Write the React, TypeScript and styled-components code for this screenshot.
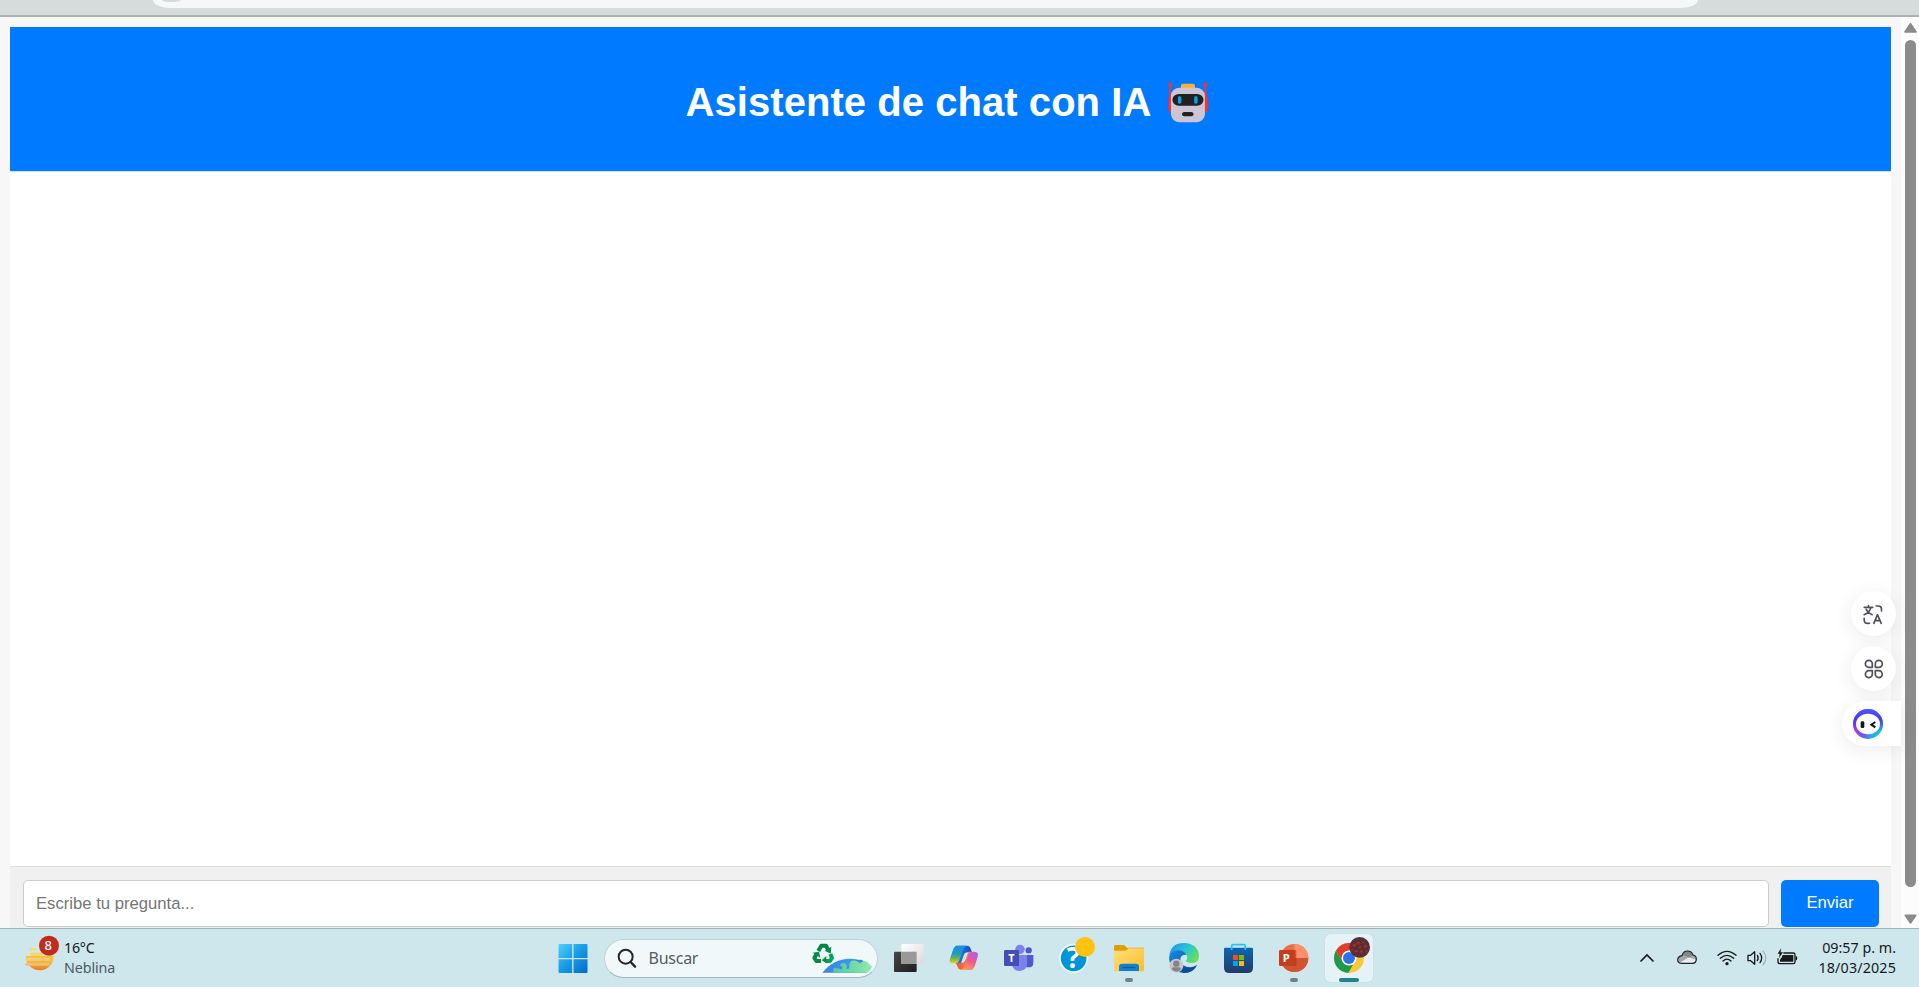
import React from "react";
import styled, { createGlobalStyle } from "styled-components";

const GlobalStyle = createGlobalStyle`
  * { box-sizing: border-box; }
  html, body { margin: 0; padding: 0; overflow: hidden; }
  body { font-family: "Liberation Sans", Arial, sans-serif; }
  svg { display: block; flex: none; }
`;

const Screen = styled.div`
  display: flex;
  flex-direction: column;
  width: 100vw;
  height: 100vh;
  overflow: hidden;
  background: #f7f7f7;
`;

const BrowserBar = styled.div`
  flex: none;
  height: 17px;
  padding-left: 153px;
  background: #d6dcdb;
  border-bottom: 2px solid #a9b2af;
`;

const AddressBar = styled.div`
  width: 1545px;
  height: 8px;
  padding-left: 9px;
  overflow: hidden;
  border-radius: 0 0 18px 18px / 0 0 8px 8px;
  background: #f5f8f7;
`;

const SiteButton = styled.div`
  width: 19px;
  height: 2px;
  border-radius: 0 0 9px 9px / 0 0 2px 2px;
  background: #d6dcdb;
`;

const Viewport = styled.div`
  position: relative;
  flex: 1;
  min-height: 0;
  display: flex;
`;

const Page = styled.main`
  flex: 1;
  display: flex;
  flex-direction: column;
  padding: 10px 10px 0;
`;

const Header = styled.header`
  flex: none;
  height: 144px;
  display: flex;
  justify-content: center;
  align-items: center;
  gap: 17px;
  padding: 6px 6px 0 0;
  background: #007bff;
  color: #fff;
`;

const Title = styled.h1`
  margin: 0;
  font-size: 40px;
  line-height: 46px;
  font-weight: 700;
  letter-spacing: 0.05px;
  white-space: nowrap;
`;

const Messages = styled.section`
  flex: 1;
  background: #fff;
  border-top: 1px solid #ddd;
`;

const Composer = styled.form`
  flex: none;
  height: 62px;
  display: flex;
  gap: 12px;
  padding: 13px 12px 1px 13px;
  background: #f0f0f0;
  border-top: 1px solid #ddd;
`;

const Question = styled.input`
  flex: 1;
  height: 47px;
  padding: 0 12px;
  font: 16.67px "Liberation Sans", Arial, sans-serif;
  border: 1px solid #ccc;
  border-radius: 5px;
  background: #fff;
  outline: none;
  &::placeholder { color: #757575; opacity: 1; }
`;

const Send = styled.button`
  width: 98px;
  height: 47px;
  padding: 0 0 2px;
  border: 0;
  border-radius: 5px;
  background: #007bff;
  color: #fff;
  font: 16.67px "Liberation Sans", Arial, sans-serif;
`;

const Scrollbar = styled.div`
  flex: none;
  width: 18px;
  display: flex;
  flex-direction: column;
  align-items: center;
  padding: 6px 0 4px 1px;
  background: #fcfcfc;
`;

const Thumb = styled.div`
  width: 11px;
  height: 847px;
  margin: 7px 0 27px;
  border-radius: 6px;
  background: #8b8b8b;
`;

const FloatingTools = styled.aside`
  position: absolute;
  right: 18px;
  top: 574px;
  display: flex;
  flex-direction: column;
  align-items: flex-end;
  gap: 10px;
`;

const ToolBubble = styled.div<{ $docked?: boolean }>`
  display: flex;
  align-items: center;
  justify-content: ${(p) => (p.$docked ? "flex-start" : "center")};
  width: ${(p) => (p.$docked ? 59 : 45)}px;
  height: 45px;
  margin-right: ${(p) => (p.$docked ? 0 : 5)}px;
  padding-left: ${(p) => (p.$docked ? 11 : 0)}px;
  border-radius: ${(p) => (p.$docked ? "23px 0 0 23px" : "50%")};
  background: #fff;
  box-shadow: 0 4px 20px rgba(0, 0, 0, 0.08);
`;

const Taskbar = styled.footer`
  flex: none;
  height: 59px;
  display: flex;
  align-items: center;
  background: #cee7ed;
  border-top: 1px solid #9fb2b6;
  font-family: "Noto Sans", "Segoe UI", sans-serif;
  color: #15191a;
`;

const Weather = styled.div`
  flex: none;
  width: 545px;
  padding-left: 25px;
  display: flex;
  gap: 4px;

  svg { margin-top: -3px; }
`;

const TextLines = styled.div<{ $right?: boolean }>`
  font-size: 14.3px;
  line-height: 20px;
  letter-spacing: ${(p) => (p.$right ? 0 : -0.25)}px;
  white-space: nowrap;
  text-align: ${(p) => (p.$right ? "right" : "left")};
`;

const Muted = styled.div`
  letter-spacing: -0.1px;
  color: #4b5a5d;
`;

const DateLine = styled.div`
  letter-spacing: 0.15px;
`;

const Dock = styled.nav`
  flex: none;
  display: flex;
  align-items: center;
`;

const Slot = styled.div`
  position: relative;
  width: 55px;
  height: 48px;
  display: flex;
  justify-content: center;
`;

const Tile = styled.div<{ $active?: boolean }>`
  width: 48px;
  height: 48px;
  border-radius: 5px;
  background: ${(p) => (p.$active ? "#e5f2f7" : "transparent")};
  box-shadow: ${(p) => (p.$active ? "0 0 1px #a9bdc2" : "none")};
`;

const Indicator = styled.span<{ $active?: boolean }>`
  position: absolute;
  left: 50%;
  bottom: 0;
  width: ${(p) => (p.$active ? 20 : 8)}px;
  height: 4px;
  border-radius: 2px;
  transform: translateX(-50%);
  background: ${(p) => (p.$active ? "#23808f" : "#738084")};
`;

const Search = styled.div`
  width: 274px;
  height: 39px;
  margin: 0 4px 0 3.5px;
  padding: 0 5px 0 12.5px;
  display: flex;
  align-items: center;
  border-radius: 20px;
  border: 1px solid #c0d4da;
  border-bottom-color: #a3b8bd;
  background: #f0f8fa;
`;

const SearchLabel = styled.span`
  flex: 1;
  padding-left: 11.5px;
  font-size: 16px;
  letter-spacing: -0.25px;
  color: #555d5f;
`;

const Tray = styled.div`
  flex: 1;
  display: flex;
  align-items: center;
  justify-content: flex-end;
  padding-right: 23px;
`;

const TrayGroup = styled.div`
  display: flex;
  align-items: center;
  gap: 10px;
  margin: 0 20px 0 23px;
`;

const CloudSlot = styled.div`
  margin-right: 10px;
`;

const Robot = () => (
  <svg width="41" height="42" viewBox="1372 62 111 126" preserveAspectRatio="none">
    <g fill="#f8312f">
      <circle cx="1378" cy="73" r="6" />
      <circle cx="1473" cy="73" r="6" />
      <path d="M1376 75h4l2 40h-7zM1471 75h4l2 40h-7z" />
      <rect x="1373" y="110" width="12" height="45" rx="5" />
      <rect x="1468" y="110" width="12" height="45" rx="5" />
    </g>
    <rect x="1407" y="70" width="38" height="18" rx="6" fill="#ffb02e" />
    <rect x="1380" y="82" width="92" height="104" rx="24" fill="#cdc4d6" />
    <rect x="1384" y="101" width="84" height="35" rx="17" fill="#212121" />
    <rect x="1399" y="108" width="9" height="22" rx="4" fill="#00a6ed" />
    <rect x="1443" y="108" width="9" height="22" rx="4" fill="#00a6ed" />
    <rect x="1410" y="155" width="31" height="13" rx="6" fill="#212121" />
  </svg>
);

const ArrowUp = () => (
  <svg width="13" height="10" viewBox="0 0 13 10">
    <path d="M6.5 1 11.8 8.7H1.2Z" fill="#8b8b8b" stroke="#8b8b8b" strokeWidth="2" strokeLinejoin="round" />
  </svg>
);

const ArrowDown = () => (
  <svg width="13" height="10" viewBox="0 0 13 10">
    <path d="M6.5 8.7 11.5 1.5H1.5Z" fill="#8b8b8b" stroke="#8b8b8b" strokeWidth="2" strokeLinejoin="round" />
  </svg>
);

const TranslateIcon = () => (
  <svg width="22" height="22" viewBox="187.500 98 66 66" fill="none" stroke="#50505a" strokeWidth="5" strokeLinecap="round" strokeLinejoin="round">
    <path d="M191 111h26M204 106v5M211 112c-3 10-10 17-20 21M197 117c4 8 10 13 18 16" />
    <path d="M227 107h6q10 0 10 10v5M191 144v4q0 11 11 11h5" />
    <path d="M220 159l11-26 11 26M224 151h14" />
  </svg>
);

const CloverIcon = () => (
  <svg width="22" height="22" viewBox="187 264 66 66" fill="none" stroke="#50505a" strokeWidth="5" strokeLinejoin="round">
    <path d="M215 292h-10a10.500 10.500 0 1 1 10-10.500zM224 292v-10.500a10.500 10.500 0 1 1 10.500 10.500zM215 302v10a10.500 10.500 0 1 1-10.500-10zM224 302h10.500a10.500 10.500 0 1 1-10.500 10z" />
  </svg>
);

const AssistantIcon = () => (
  <svg width="30" height="30" viewBox="159 417 90 90">
    <defs>
      <linearGradient id="ring" x1="0.1" y1="0.6" x2="0.85" y2="0.8">
        <stop offset="0" stopColor="#b43be0" />
        <stop offset="0.45" stopColor="#5b65f0" />
        <stop offset="0.8" stopColor="#20b8e0" />
      </linearGradient>
      <linearGradient id="ringTop" x1="0" y1="0" x2="0" y2="1">
        <stop offset="0" stopColor="#4a58ff" />
        <stop offset="0.35" stopColor="#4a35f5" />
        <stop offset="0.75" stopColor="#4a35f5" stopOpacity="0" />
      </linearGradient>
    </defs>
    <circle cx="204" cy="462" r="45" fill="url(#ring)" />
    <circle cx="204" cy="462" r="45" fill="url(#ringTop)" />
    <ellipse cx="204" cy="462" rx="36" ry="31" fill="#fff" />
    <rect x="182" y="454" width="11" height="20" rx="4" fill="#15151c" />
    <path d="M226 456l-12 8 12 8" fill="none" stroke="#15151c" strokeWidth="6" />
  </svg>
);

const WeatherIcon = () => (
  <svg width="35" height="38" viewBox="75 255 105 114">
    <defs>
      <linearGradient id="sun" x1="0" y1="0" x2="0" y2="1">
        <stop offset="0.3" stopColor="#fbc02d" />
        <stop offset="1" stopColor="#f4791f" />
      </linearGradient>
    </defs>
    <path d="M78 318h83a42 42 0 0 1-83 10z" fill="url(#sun)" />
    <g strokeLinecap="round" strokeWidth="9" fill="none">
      <path d="M94 298h10" stroke="#fbdc70" />
      <path d="M94 313h40" stroke="#fad664" />
      <path d="M81 328h43M136 328h9" stroke="#ead08b" />
      <path d="M80 343h66" stroke="#e5c07e" />
    </g>
    <circle cx="147" cy="287" r="30" fill="#c42b1c" />
    <text x="145" y="301" textAnchor="middle" fontFamily="Noto Sans, sans-serif" fontSize="39" fontWeight="500" fill="#fff">8</text>
  </svg>
);

const StartIcon = () => (
  <svg width="48" height="48" viewBox="25.500 42 144 144">
    <defs>
      <linearGradient id="win" gradientUnits="userSpaceOnUse" x1="54" y1="72" x2="141" y2="159">
        <stop offset="0" stopColor="#4fd0fb" />
        <stop offset="0.5" stopColor="#189ae4" />
        <stop offset="1" stopColor="#0669c9" />
      </linearGradient>
    </defs>
    <path d="M57 72h38v42H54V75q0-3 3-3zM99 72h39q3 0 3 3v39H99zM54 118h41v41H57q-3 0-3-3zM99 118h42v38q0 3-3 3H99z" fill="url(#win)" />
  </svg>
);

const SearchIcon = () => (
  <svg width="20" height="20" viewBox="232 84 60 60" fill="none" stroke="#262626">
    <circle cx="258" cy="110" r="21" strokeWidth="6" />
    <path d="M273 126l13 14" strokeWidth="7" strokeLinecap="round" />
  </svg>
);

const EarthArt = () => (
  <svg width="60" height="32" viewBox="812 72 180 96">
    <defs>
      <linearGradient id="earth">
        <stop offset="0" stopColor="#3b83e2" />
        <stop offset="1" stopColor="#36a7f0" />
      </linearGradient>
      <linearGradient id="land">
        <stop offset="0" stopColor="#52c7a3" />
        <stop offset="1" stopColor="#8deba9" />
      </linearGradient>
    </defs>
    <path d="M843 164q34-42 82-42 38 0 66 24-4 12-15 18z" fill="url(#earth)" />
    <path d="M877 163q-4-14 5-14l20 5q4-10-5-10-3-9 12-9 9 2 7 18 8 2 8-10-1-12 8-15l24-2 12 2q12 3 23 18-4 12-15 18z" fill="url(#land)" />
    <path d="M940 126l16 9 10-5-6-5z" fill="#2e8be8" />
    <g fill="none" strokeWidth="12" strokeLinejoin="round">
      <path d="M831 99l9-16h14l7 14" stroke="#008748" />
      <path d="M867 108l5 12-6 9h-13" stroke="#00a651" />
      <path d="M826 107l-7 13 6 9h14" stroke="#078b3e" />
    </g>
    <path d="M870 86l-2 21-18-9zM855 114v22l-14-9zM814 104l19-3 4 18z" fill="#078f46" />
  </svg>
);

const TaskViewIcon = () => (
  <svg width="48" height="48" viewBox="45 42 144 144">
    <defs>
      <linearGradient id="dark" x1="0" y1="0" x2="1" y2="1"><stop stopColor="#484848" /><stop offset="1" stopColor="#1e1e1e" /></linearGradient>
      <linearGradient id="light" x1="0" y1="0" x2="1" y2="1"><stop stopColor="#fff" /><stop offset="1" stopColor="#dadada" /></linearGradient>
    </defs>
    <rect x="72" y="95" width="68" height="61" rx="3" fill="url(#dark)" />
    <rect x="94" y="72" width="67" height="60" rx="3" fill="url(#light)" />
    <path d="M94 95h46v37H97q-3 0-3-3z" fill="#999" />
  </svg>
);

const CopilotIcon = () => (
  <svg width="48" height="48" viewBox="210 42 144 144">
    <defs>
      <linearGradient id="cpA" x1="0" y1="0" x2="0" y2="1">
        <stop offset="0.05" stopColor="#168fe8" /><stop offset="0.45" stopColor="#239bb5" /><stop offset="0.72" stopColor="#69b453" /><stop offset="1" stopColor="#eed02b" />
      </linearGradient>
      <linearGradient id="cpB" x1="0.7" y1="0" x2="0.3" y2="1">
        <stop offset="0" stopColor="#b75ce8" /><stop offset="0.5" stopColor="#ee5a91" /><stop offset="1" stopColor="#ff9a5c" />
      </linearGradient>
      <linearGradient id="cpC"><stop stopColor="#168ced" /><stop offset="1" stopColor="#1b45c5" /></linearGradient>
      <linearGradient id="cpD"><stop stopColor="#ef5130" /><stop offset="1" stopColor="#ff9a5a" /></linearGradient>
    </defs>
    <path d="M257 77h34q8 0 11 9l4 11h-13q-9 0-12 9l-8 24H255z" fill="url(#cpC)" />
    <path d="M307 149h-34q-8 0-10-8l-5-12h15q10 0 13-9l9-25h20z" fill="url(#cpD)" />
    <path d="M262 77h28q-8 3-11 14l-11 29q-4 10-12 10h-8q-12 0-8-14l9-27q4-12 13-12z" fill="url(#cpA)" />
    <path d="M303 149h-29q8-3 11-13l10-30q3-10 12-10h8q12 0 8 14l-8 26q-4 13-12 13z" fill="url(#cpB)" />
  </svg>
);

const TeamsIcon = () => (
  <svg width="48" height="48" viewBox="375 42 144 144">
    <circle cx="476" cy="91" r="9.500" fill="#5059c9" />
    <path d="M460 105h30v23q0 14-14 14h-16z" fill="#5059c9" />
    <circle cx="450" cy="88" r="14" fill="#7b83eb" />
    <path d="M426 105h45v25q0 22-22 23-19 0-23-19z" fill="#7b83eb" />
    <rect x="402" y="90" width="45" height="48" rx="4" fill="#444cb5" />
    <text x="424.500" y="126" textAnchor="middle" fontFamily="Noto Sans, sans-serif" fontWeight="700" fontSize="33" fill="#fff">T</text>
  </svg>
);

const HelpIcon = () => (
  <svg width="48" height="48" viewBox="540 42 144 144">
    <circle cx="611" cy="115" r="41" fill="#0095d9" stroke="#f5fcff" strokeWidth="5" />
    <text x="610" y="143" textAnchor="middle" fontFamily="Open Sans, sans-serif" fontWeight="700" fontSize="83" fill="#fff">?</text>
    <circle cx="645" cy="81" r="30" fill="#ffc20e" />
  </svg>
);

const ExplorerIcon = () => (
  <svg width="48" height="48" viewBox="45 42 144 144">
    <defs>
      <linearGradient id="folder" x1="0" y1="0" x2="1" y2="1"><stop stopColor="#ffe07a" /><stop offset="1" stopColor="#fbbd2c" /></linearGradient>
    </defs>
    <path d="M72 78q0-3 3-3h24q4 0 7 3l5 5h48q3 0 3 3v12H72z" fill="#dca006" />
    <path d="M72 92h32q4 0 7-3l4-4h44q3 0 3 3v63q0 3-3 3H75q-3 0-3-3z" fill="url(#folder)" />
    <path d="M87 153v-13q0-9 9-9h42q9 0 9 9v13z" fill="#1180d0" />
    <path d="M97 143h39" stroke="#0a559a" strokeWidth="3" />
  </svg>
);

const EdgeIcon = () => (
  <svg width="48" height="48" viewBox="210 42 144 144">
    <defs>
      <linearGradient id="edTop" x1="0" y1="0.2" x2="1" y2="0.7"><stop stopColor="#2394e5" /><stop offset="0.5" stopColor="#2bc4d8" /><stop offset="1" stopColor="#69e34b" /></linearGradient>
      <linearGradient id="edLeft" x1="0" y1="0" x2="1" y2="1"><stop stopColor="#1689e0" /><stop offset="1" stopColor="#0c51a5" /></linearGradient>
    </defs>
    <path d="M237 114q4-27 27-27 20 0 27 17-21-1-20 16 3 22 31 22 10-1 19-7-13 25-39 24-41-2-45-45z" fill="url(#edLeft)" />
    <path d="M237 109q5-40 45-40 43 2 45 39 0 22-22 21-13 0-18-5 8-8 3-18-8-15-26-15-20 0-27 18z" fill="url(#edTop)" />
    <path d="M270 117q-3 26 28 27 15 0 23-9-12 25-41 23-27-12-10-41z" fill="#0b4c9b" />
    <circle cx="259" cy="137" r="21" fill="#c7c7c7" />
    <circle cx="259" cy="131" r="9.500" fill="#858585" />
    <path d="M245 148q0-6 6-6h16q6 0 6 6-13 14-28 0z" fill="#858585" />
  </svg>
);

const StoreIcon = () => (
  <svg width="48" height="48" viewBox="375 42 144 144">
    <defs>
      <linearGradient id="bag" x1="0" y1="0" x2="0" y2="1"><stop stopColor="#0b67b5" /><stop offset="1" stopColor="#243a69" /></linearGradient>
    </defs>
    <path d="M402 87q0-4 4-4h79q4 0 4 4v56q0 16-16 16h-55q-16 0-16-16z" fill="url(#bag)" />
    <path d="M425 90V78q0-4 4-4h33q4 0 4 4v12" fill="none" stroke="#27c3f3" strokeWidth="5" />
    <path d="M429 105h15v15h-15z" fill="#f25022" />
    <path d="M447 105h15v15h-15z" fill="#7fba00" />
    <path d="M429 123h15v15h-15z" fill="#00a4ef" />
    <path d="M447 123h15v15h-15z" fill="#ffb900" />
  </svg>
);

const PowerPointIcon = () => (
  <svg width="48" height="48" viewBox="540 42 144 144">
    <circle cx="613" cy="114" r="42" fill="#ed6c47" />
    <path d="M613 72a42 42 0 0 1 42 42h-42z" fill="#ff8f6b" />
    <path d="M571 114h84a42 42 0 0 1-84 0z" fill="#d35230" />
    <path d="M590 90h29v48h-29z" fill="#9e3119" opacity="0.55" />
    <rect x="567" y="90" width="48" height="48" rx="4" fill="#c43e1c" />
    <text x="589" y="126" textAnchor="middle" fontFamily="Noto Sans, sans-serif" fontWeight="700" fontSize="34" fill="#fff">P</text>
  </svg>
);

const ChromeIcon = () => (
  <svg width="48" height="48" viewBox="705 42 144 144">
    <circle cx="777" cy="114" r="45" fill="#fcc934" />
    <path d="M738 91.500A45 45 0 0 1 816 91.500H777V114z" fill="#e33b2e" />
    <path d="M738 91.500l20 34 19 10 12-1L775 159A45 45 0 0 1 738 91.500z" fill="#1e9a49" />
    <path d="M738 91.500l19.500 34L777 91.500z" fill="#e33b2e" />
    <circle cx="777" cy="114" r="22.500" fill="#fff" />
    <circle cx="777" cy="114" r="18" fill="#2b72e8" />
    <circle cx="809" cy="82" r="31" fill="#5a2e33" />
    <g fill="#a32a2d">
      <path d="M786 76l8-6 5 5-6 7zM801 65l9 2-2 7-8-2zM820 76l11-2 2 7-9 4zM793 92l10-3 1 6-9 4zM812 89l8 4-3 7-8-4zM806 79l7-1 1 6-7 2zM784 86l6 1-2 5-5-1zM827 91l7-1-2 7-6-1zM818 64l6 3-3 5-5-4z" />
    </g>
    <g fill="#34413d">
      <path d="M797 57l6-4 3 7-6 4zM818 58l7 2-3 5-5-4zM781 79l5-1 1 6-6 1zM805 103l7 1-2 6-7-2zM831 84l6 1-3 6-4-2zM798 82l5 1-2 4-4-1zM813 68l4 2-2 4-3-2z" />
    </g>
  </svg>
);

const ChevronUp = () => (
  <svg width="14" height="10" viewBox="0 0 14 10" fill="none" stroke="#171b1c" strokeWidth="1.700" strokeLinecap="round">
    <path d="M1 8l6-6 6 6" />
  </svg>
);

const CloudIcon = () => (
  <svg width="20" height="16" viewBox="174 90 60 48">
    <path d="M187 130q-11-1-11-11 1-10 13-12 3-14 17-14 12 0 16 12 10 2 10 13-1 12-12 12z" fill="#a6a8ab" />
    <path d="M182 128l28-16 22 8q-2 10-13 10h-32z" fill="#ececec" />
    <path d="M189 107q9-2 21 6l12-8q-4-12-16-12-14 0-17 14z" fill="#858789" />
    <path d="M187 130q-11-1-11-11 1-10 13-12 3-14 17-14 12 0 16 12 10 2 10 13-1 12-12 12z" fill="none" stroke="#202426" strokeWidth="3.500" />
  </svg>
);

const WifiIcon = () => (
  <svg width="20" height="16" viewBox="294 88 60 48" fill="none" stroke="#171b1c" strokeWidth="4" strokeLinecap="round">
    <path d="M297 104q27-24 54 0M304 113q20-18 40 0M312 121q12-11 24 0" />
    <circle cx="324" cy="129" r="5" fill="#171b1c" stroke="none" />
  </svg>
);

const VolumeIcon = () => (
  <svg width="20" height="18" viewBox="384 87 60 54" fill="none" stroke="#171b1c" strokeWidth="4" strokeLinecap="round" strokeLinejoin="round">
    <path d="M387 106h8l12-11v38l-12-11h-8zM415 106q5 8 0 16M423 100q10 14 0 28" />
    <path d="M432 93q17 21 0 42" stroke="#9aacb0" strokeWidth="3.500" />
  </svg>
);

const BatteryIcon = () => (
  <svg width="21" height="20" viewBox="473 83 63 60">
    <path d="M492 98h30q5 0 5 5v22q0 5-5 5h-40q-6 0-6-6v-10" fill="none" stroke="#171b1c" strokeWidth="4" />
    <path d="M490 104h32v20h-40v-6q6-6 8-14z" fill="#171b1c" />
    <path d="M529 107q6 1 5 7 0 6-5 7z" fill="#171b1c" />
    <path d="M485 84l-10 16h6l-2 13 12-17h-7z" fill="#171b1c" />
  </svg>
);

type DockApp = { name: string; icon: React.ReactNode; running?: boolean; active?: boolean };

const apps: DockApp[] = [
  { name: "taskview", icon: <TaskViewIcon /> },
  { name: "copilot", icon: <CopilotIcon /> },
  { name: "teams", icon: <TeamsIcon /> },
  { name: "help", icon: <HelpIcon /> },
  { name: "explorer", icon: <ExplorerIcon />, running: true },
  { name: "edge", icon: <EdgeIcon /> },
  { name: "store", icon: <StoreIcon /> },
  { name: "powerpoint", icon: <PowerPointIcon />, running: true },
  { name: "chrome", icon: <ChromeIcon />, running: true, active: true },
];

export default function App() {
  return (
    <Screen>
      <GlobalStyle />
      <BrowserBar>
        <AddressBar>
          <SiteButton />
        </AddressBar>
      </BrowserBar>
      <Viewport>
        <Page>
          <Header>
            <Title>Asistente de chat con IA</Title>
            <Robot />
          </Header>
          <Messages />
          <Composer>
            <Question placeholder="Escribe tu pregunta..." />
            <Send type="button">Enviar</Send>
          </Composer>
        </Page>
        <Scrollbar>
          <ArrowUp />
          <Thumb />
          <ArrowDown />
        </Scrollbar>
        <FloatingTools>
          <ToolBubble><TranslateIcon /></ToolBubble>
          <ToolBubble><CloverIcon /></ToolBubble>
          <ToolBubble $docked><AssistantIcon /></ToolBubble>
        </FloatingTools>
      </Viewport>
      <Taskbar>
        <Weather>
          <WeatherIcon />
          <TextLines>
            <div>16°C</div>
            <Muted>Neblina</Muted>
          </TextLines>
        </Weather>
        <Dock>
          <Slot><Tile><StartIcon /></Tile></Slot>
          <Search>
            <SearchIcon />
            <SearchLabel>Buscar</SearchLabel>
            <EarthArt />
          </Search>
          {apps.map((app) => (
            <Slot key={app.name}>
              <Tile $active={app.active}>{app.icon}</Tile>
              {app.running && <Indicator $active={app.active} />}
            </Slot>
          ))}
        </Dock>
        <Tray>
          <ChevronUp />
          <TrayGroup>
            <CloudSlot><CloudIcon /></CloudSlot>
            <WifiIcon />
            <VolumeIcon />
            <BatteryIcon />
          </TrayGroup>
          <TextLines $right>
            <div>09:57 p. m.</div>
            <DateLine>18/03/2025</DateLine>
          </TextLines>
        </Tray>
      </Taskbar>
    </Screen>
  );
}
